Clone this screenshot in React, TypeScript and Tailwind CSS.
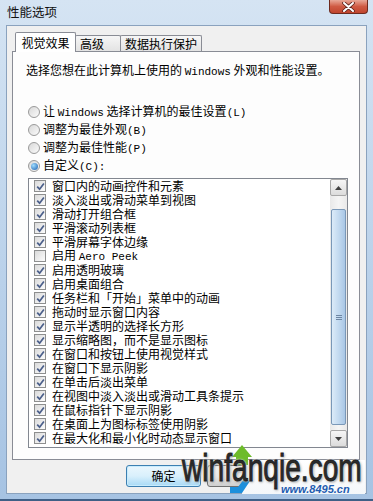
import React from 'react';

const items: { label: React.ReactNode; checked: boolean }[] = [
  { label: '窗口内的动画控件和元素', checked: true },
  { label: '淡入淡出或滑动菜单到视图', checked: true },
  { label: '滑动打开组合框', checked: true },
  { label: '平滑滚动列表框', checked: true },
  { label: '平滑屏幕字体边缘', checked: true },
  { label: <>启用 <Latin>Aero Peek</Latin></>, checked: false },
  { label: '启用透明玻璃', checked: true },
  { label: '启用桌面组合', checked: true },
  { label: '任务栏和「开始」菜单中的动画', checked: true },
  { label: '拖动时显示窗口内容', checked: true },
  { label: '显示半透明的选择长方形', checked: true },
  { label: '显示缩略图，而不是显示图标', checked: true },
  { label: '在窗口和按钮上使用视觉样式', checked: true },
  { label: '在窗口下显示阴影', checked: true },
  { label: '在单击后淡出菜单', checked: true },
  { label: '在视图中淡入淡出或滑动工具条提示', checked: true },
  { label: '在鼠标指针下显示阴影', checked: true },
  { label: '在桌面上为图标标签使用阴影', checked: true },
  { label: '在最大化和最小化时动态显示窗口', checked: true },
];

function Latin({ children }: { children: React.ReactNode }) {
  return <span className="font-['Liberation_Mono',monospace] text-[11px]">{children}</span>;
}

function Radio({ checked, children }: { checked?: boolean; children: React.ReactNode }) {
  return (
    <div className="h-[18px] flex items-center pl-[15px]">
      <span className="w-[12px] h-[12px] rounded-full border border-[#9a9a9a] bg-linear-to-br from-[#d8d8d8] to-[#fbfbfb] flex items-center justify-center shrink-0">
        {checked && (
          <span className="w-[7px] h-[7px] rounded-full bg-[radial-gradient(circle_at_35%_35%,#9fdcff,#1c5fae)]" />
        )}
      </span>
      <span className="ml-[3px] leading-[16px]">{children}</span>
    </div>
  );
}

function Check({ checked }: { checked: boolean }) {
  return (
    <span className="w-[12px] h-[12px] border border-[#8e8f8f] bg-linear-to-br from-[#dadada] to-[#fcfcfc] flex items-center justify-center shrink-0">
      {checked && (
        <svg width="9" height="9" viewBox="0 0 9 9">
          <path d="M1.2 4.6 L3.6 7.2 L7.9 1.4" stroke="#4b5f8a" strokeWidth="1.7" fill="none" />
        </svg>
      )}
    </span>
  );
}

function Arrow({ up }: { up?: boolean }) {
  return (
    <div className="h-[17px] border border-[#a8a8a8] rounded-[2px] bg-linear-to-b from-[#f6f6f6] to-[#dcdcdc] flex items-center justify-center">
      <svg width="7" height="4" viewBox="0 0 7 4">
        <path d={up ? 'M0 4 L3.5 0 L7 4 Z' : 'M0 0 L3.5 4 L7 0 Z'} fill="#404040" />
      </svg>
    </div>
  );
}

export default function App() {
  return (
    <div className="relative w-[373px] h-[501px] overflow-hidden flex flex-col bg-linear-to-b from-[#d5e4f3] via-[#bcd3eb] to-[#a6c3e3] border-b-[2px] border-[#3f5f86] font-['Noto_Sans_CJK_SC',sans-serif] text-[12px] text-black">
      {/* TITLE BAR */}
      <div className="h-[26px] shrink-0 flex items-start justify-between">
        <span className="pl-[7px] pt-[4px] leading-[16px] text-[12.5px] text-[#111]">性能选项</span>
        <div className="mr-[5px] w-[39px] h-[14px] rounded-b-[4px] border border-t-0 border-[#6d2a1e] bg-linear-to-b from-[#e8a898] via-[#cf5a43] to-[#c0452e] flex items-center justify-center">
          <svg width="13" height="10" viewBox="0 0 13 10">
            <path d="M2 1 L11 9 M11 1 L2 9" stroke="#5a2018" strokeWidth="3.6" strokeLinecap="round" />
            <path d="M2 1 L11 9 M11 1 L2 9" stroke="#ffffff" strokeWidth="2" strokeLinecap="round" />
          </svg>
        </div>
      </div>

      {/* CLIENT */}
      <div className="mx-[7px] h-[467px] bg-[#f0f0f0] shadow-[0_0_0_1px_#8aa2be]">
        <div className="pt-[6px] pl-[5px] pr-[6px]">
          {/* TABS */}
          <div className="relative z-10 flex items-end h-[19px] pl-[3px]">
            <div className="w-[61px] h-[20px] -mb-px bg-white border border-b-0 border-[#898c95] rounded-t-[2px] flex items-center justify-center leading-[16px]">
              视觉效果
            </div>
            <div className="w-[46px] h-[16px] -ml-px border border-b-0 border-[#898c95] bg-linear-to-b from-[#f6f6f6] to-[#e3e3e3] pl-[4px] leading-[16px] rounded-t-[2px]">
              高级
            </div>
            <div className="w-[82px] h-[16px] -ml-px border border-b-0 border-[#898c95] bg-linear-to-b from-[#f6f6f6] to-[#e3e3e3] pl-[4px] leading-[16px] rounded-t-[2px]">
              数据执行保护
            </div>
          </div>

          {/* PANE */}
          <div className="h-[409px] border border-[#898c95] bg-[#fdfdfd]">
            <p className="mt-[10px] pl-[13px] leading-[16px]">
              选择您想在此计算机上使用的 <Latin>Windows</Latin> 外观和性能设置。
            </p>

            <div className="mt-[23px]">
              <Radio>让 <Latin>Windows</Latin> 选择计算机的最佳设置<Latin>(L)</Latin></Radio>
              <Radio>调整为最佳外观<Latin>(B)</Latin></Radio>
              <Radio>调整为最佳性能<Latin>(P)</Latin></Radio>
              <Radio checked>自定义<Latin>(C):</Latin></Radio>
            </div>

            {/* LIST */}
            <div className="mt-[3px] ml-[15px] w-[320px] h-[270px] border border-[#828790] bg-white flex">
              <div className="flex-1">
                {items.map((it, i) => (
                  <div key={i} className="h-[14px] flex items-center pl-[5px]">
                    <Check checked={it.checked} />
                    <span className="ml-[6px] leading-[14px] whitespace-nowrap">{it.label}</span>
                  </div>
                ))}
              </div>
              <div className="w-[17px] flex flex-col bg-linear-to-r from-[#e9e9e9] via-[#f5f5f5] to-[#e9e9e9]">
                <Arrow up />
                <div className="flex-1">
                  <div className="mt-[13px] h-[216px] mx-px border border-[#7a98b8] rounded-[2px] bg-linear-to-r from-[#dcebf8] via-[#c3daf0] to-[#a9c7e6] flex items-center justify-center">
                    <div className="flex flex-col gap-[1px]">
                      <span className="w-[6px] h-px bg-[#6d86a3]" />
                      <span className="w-[6px] h-px bg-[#6d86a3]" />
                      <span className="w-[6px] h-px bg-[#6d86a3]" />
                    </div>
                  </div>
                </div>
                <Arrow />
              </div>
            </div>
          </div>
        </div>

        {/* BUTTONS (the ones right of 确定 sit under the watermark) */}
        <div className="mt-[5px] pl-[119px] flex gap-[6px]">
          <div className="w-[75px] h-[22px] shrink-0 rounded-[3px] border border-[#3c7fb1] bg-linear-to-b from-[#eaf6fd] via-[#d9f0fc] to-[#a7d9f5] flex items-center justify-center shadow-[inset_0_0_0_1px_#c8ecfd]">
            确定
          </div>
          <div className="w-[75px] h-[22px] shrink-0 rounded-[3px] border border-[#707070] bg-linear-to-b from-[#f2f2f2] via-[#ebebeb] to-[#cfcfcf]" />
        </div>
      </div>

      {/* WATERMARK */}
      <div className="absolute left-[242px] top-[460px] w-[123px] h-[34px] bg-linear-to-b from-[#ffffff] to-[#f4f7fa]" />
      <svg className="absolute left-[228px] top-[443px]" width="30" height="56" viewBox="0 0 30 56">
        <path d="M8 22 L8 14 L4 14 L14 2 L24 14 L20 14 L20 22 Z" fill="#6dbb2a" />
        <path d="M22 38 L14 50 L2 50 L2 44 L10 44 L16 36 Z" fill="#1c8fdc" />
      </svg>
      <div className="absolute left-[281px] top-[483px] text-[11px] leading-[12px] font-bold italic text-[#1f5cb0] font-['Liberation_Sans',sans-serif]">
        www.8495.cn
      </div>
      <div className="absolute left-[182px] top-[449px] origin-left scale-x-[0.74] text-[38px] leading-[38px] text-[#2b2b2b] font-['Liberation_Sans',sans-serif] whitespace-nowrap [-webkit-text-stroke:1px_#1e1e1e] [text-shadow:0_0_2px_#ffffff,0_0_3px_#ffffff,1px_1px_3px_#666]">
        winfanqie.com
      </div>
    </div>
  );
}
